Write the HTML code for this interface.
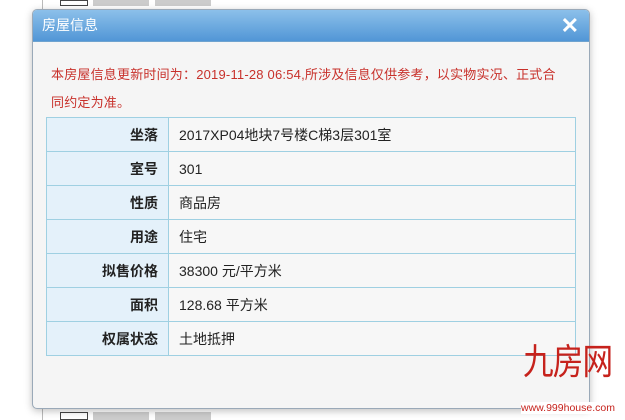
<!DOCTYPE html>
<html><head><meta charset="utf-8"><style>
*{margin:0;padding:0;box-sizing:border-box}
body{width:625px;height:420px;background:#fff;position:relative;overflow:hidden;font-family:"Liberation Sans","Noto Sans CJK SC",sans-serif}
.bg{position:absolute}
.dlg{position:absolute;left:32px;top:9px;width:558px;height:400px;background:#f5f5f5;border:1px solid #9aa9b8;border-radius:5px;box-shadow:0 2px 8px rgba(0,0,0,.25);overflow:hidden}
.hd{height:32px;background:linear-gradient(#8cc0ea,#5196d6);color:#fff;font-size:14px;line-height:30px;padding-left:9px;border-bottom:1px solid #6fa3cf}
.x{position:absolute;right:10px;top:3px;color:#fff;font-size:22px;font-weight:bold}
.msg{position:absolute;left:18px;top:51px;width:520px;color:#c8312b;font-size:13px;line-height:28px;letter-spacing:0.2px}
table{position:absolute;left:13px;top:107px;width:530px;border-collapse:collapse;font-size:14px}
td{border:1px solid #9fd0e2;height:34px;color:#222}
td.l{width:122px;background:#e4f1fa;text-align:right;padding-right:10px;font-weight:bold}
td.v{background:#f7f7f7;padding-left:10px}
.logo{position:absolute;left:523px;top:342px;color:#c6221c;font-size:36px;line-height:40px;white-space:nowrap;transform:scaleX(0.85);transform-origin:left top;letter-spacing:-1px}
.url{position:absolute;left:521px;top:402px;color:#c6221c;font-size:10.5px;white-space:nowrap;background:#fff}
</style></head><body>
<div class="bg" style="left:42px;top:0;width:1px;height:420px;background:#bbb"></div>
<div class="bg" style="left:60px;top:0;width:28px;height:6px;border:1px solid #444"></div>
<div class="bg" style="left:93px;top:0;width:56px;height:6px;background:#ccc"></div>
<div class="bg" style="left:155px;top:0;width:56px;height:6px;background:#ccc"></div>
<div class="bg" style="left:60px;top:412px;width:28px;height:8px;border:1px solid #444"></div>
<div class="bg" style="left:93px;top:412px;width:56px;height:8px;background:#ccc"></div>
<div class="bg" style="left:155px;top:412px;width:56px;height:8px;background:#ccc"></div>
<div class="dlg">
<div class="hd">房屋信息</div><div class="x">✕</div>
<div class="msg">本房屋信息更新时间为：2019-11-28 06:54,所涉及信息仅供参考，以实物实况、正式合<br>同约定为准。</div>
<table>
<tr><td class="l">坐落</td><td class="v">2017XP04地块7号楼C梯3层301室</td></tr>
<tr><td class="l">室号</td><td class="v">301</td></tr>
<tr><td class="l">性质</td><td class="v">商品房</td></tr>
<tr><td class="l">用途</td><td class="v">住宅</td></tr>
<tr><td class="l">拟售价格</td><td class="v">38300 元/平方米</td></tr>
<tr><td class="l">面积</td><td class="v">128.68 平方米</td></tr>
<tr><td class="l">权属状态</td><td class="v">土地抵押</td></tr>
</table>
</div>
<div class="logo">九房网</div>
<div class="url">www.999house.com</div>
</body></html>
